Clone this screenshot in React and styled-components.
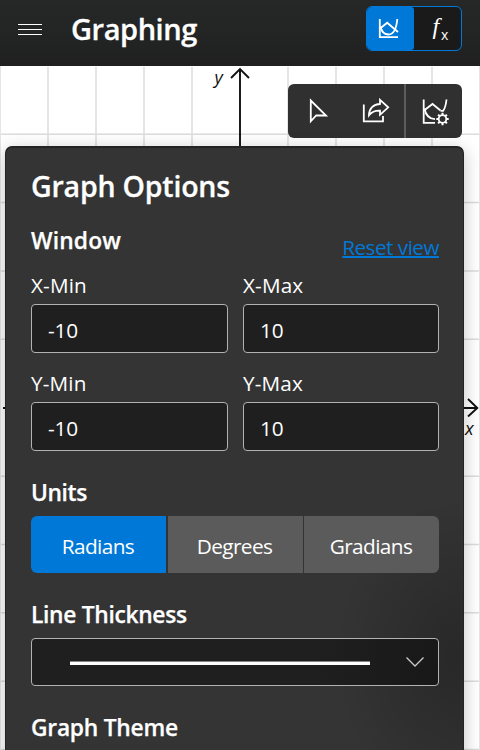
import React from "react";
import styled, { createGlobalStyle } from "styled-components";

const GlobalStyle = createGlobalStyle`
  * { box-sizing: border-box; }
  body {
    margin: 0;
    overflow: hidden;
    font-family: "Open Sans", "Noto Sans", sans-serif;
    color: #fff;
    background: #fff;
  }
`;

const Page = styled.div`
  display: flex;
  flex-direction: column;
  width: 480px;
  height: 750px;
  overflow: hidden;
`;

const Header = styled.header`
  display: flex;
  align-items: flex-start;
  flex: none;
  height: 66px;
  padding: 6px 18px 0;
  background: linear-gradient(#262828, #202020);
`;

const MenuButton = styled.button`
  display: flex;
  width: 24px;
  height: 48px;
  padding: 0;
  border: 0;
  background: none;
`;

const AppTitle = styled.h1`
  flex: 1;
  margin: 0 0 0 29px;
  font-size: 29px;
  font-weight: 600;
  line-height: 46px;
  letter-spacing: -0.45px;
  -webkit-text-stroke: 0.3px #fff;
`;

const ModeSwitch = styled.div`
  display: flex;
  width: 96px;
  height: 45px;
  border: 1.5px solid #0078d7;
  border-radius: 6px;
  background: #1a1a1a;
  overflow: hidden;
`;

const ModeButton = styled.button`
  flex: 1;
  padding: 0;
  border: 0;
  border-radius: ${(p) => (p.$active ? "0 3px 3px 0" : "0")};
  background: ${(p) => (p.$active ? "#0078d7" : "transparent")};
`;

const Stage = styled.main`
  position: relative;
  flex: 1;
  background: #fff;
`;

const Grid = styled.svg`
  display: block;
`;

const Toolbar = styled.div`
  position: absolute;
  top: 18px;
  left: 288px;
  display: flex;
  width: 174px;
  height: 54px;
  border-radius: 6px;
  background: #303030;
  overflow: hidden;
`;

const ToolButton = styled.button`
  flex: 0 0 58px;
  padding: 0;
  border: 0;
  background: none;
`;

const ToolDivider = styled.div`
  flex: 0 0 2px;
  background: #5c5c5c;
`;

const Panel = styled.section`
  position: absolute;
  top: 80px;
  left: 5px;
  display: flex;
  flex-direction: column;
  width: 459px;
  height: 640px;
  padding: 20px 25px 0 26px;
  border-radius: 7px;
  background:
    radial-gradient(ellipse 130px 160px at 459px 510px, rgba(0, 0, 0, 0.24), transparent),
    #343434;
  box-shadow: inset 0 0 0 1px #242424, inset 0 1px 0 1px #242424, 0 4px 18px rgba(0, 0, 0, 0.24);
`;

const PanelTitle = styled.h2`
  margin: 0;
  font-size: 28.5px;
  font-weight: 600;
  line-height: 41px;
  letter-spacing: -0.2px;
  -webkit-text-stroke: 0.3px #fff;
`;

const SectionTitle = styled.h3`
  height: 32px;
  margin: ${(p) => p.$gap || 0}px 0 0;
  font-size: 22.8px;
  font-weight: 600;
  line-height: 34px;
  letter-spacing: ${(p) => p.$track || 0}px;
  -webkit-text-stroke: 0.25px #fff;
`;

const SectionHead = styled.div`
  display: flex;
  justify-content: space-between;
  height: 47px;
  margin-top: 17px;
`;

const ResetLink = styled.a`
  margin-top: 7px;
  color: #0078d7;
  font-size: 20.7px;
  line-height: 32px;
  letter-spacing: -0.5px;
  text-decoration: underline;
  text-decoration-thickness: 1.5px;
  text-underline-offset: 1px;
  text-decoration-skip-ink: none;
`;

const FieldGrid = styled.div`
  display: grid;
  grid-template-columns: 197px 196px;
  gap: 16px 15px;
`;

const Field = styled.label`
  display: flex;
  flex-direction: column;
  gap: 5px;
  font-size: 20.7px;
  line-height: 28px;
  letter-spacing: 0.15px;
`;

const NumberInput = styled.input`
  width: 100%;
  height: 49px;
  padding: 3px 16px 1px;
  border: 1.5px solid #b2b2b2;
  border-radius: 4px;
  outline: 0;
  background: #1f1f1f;
  color: #fff;
  font: 20.8px "Open Sans", "Noto Sans", sans-serif;
  letter-spacing: -0.2px;
`;

const Segments = styled.div`
  display: grid;
  grid-template-columns: 135px 135px 135px;
  column-gap: 1.5px;
  height: 57px;
  margin-top: 8px;
  border-radius: 6px;
  overflow: hidden;
`;

const Segment = styled.button`
  padding: 3px 1px 1px 0;
  border: 0;
  border-radius: 0;
  background: ${(p) => (p.$active ? "#0078d7" : "#5b5b5b")};
  color: #fff;
  font: 20.8px "Open Sans", "Noto Sans", sans-serif;
  letter-spacing: -0.6px;
`;

const Select = styled.div`
  display: flex;
  align-items: center;
  justify-content: space-between;
  height: 48px;
  margin-top: 8px;
  padding: 0 13px 0 38px;
  border: 1.5px solid #b2b2b2;
  border-radius: 4px;
  background: linear-gradient(100deg, #1f1f1f 70%, #181818);
`;

const LineSample = styled.div`
  width: 300px;
  height: 4px;
  margin-top: 2px;
  border: solid #858585;
  border-width: 1px 0 0;
  background: #fff;
`;

const IconSvg = styled.svg`
  display: block;
  flex: none;
`;

const columns = [48, 96, 144, 192, 288, 336, 384, 432];
const rows = [68.2, 136.5, 205, 273.3, 410.2, 478.5, 546.8, 615.2, 683.5];

function GraphGrid() {
  return (
    <Grid width="480" height="684" viewBox="0 0 480 684" fill="none">
      <g stroke="#e5e5e5" strokeWidth="2">
        {columns.map((x) => <path key={x} d={`M${x} 1V684`} />)}
        <path d="M0 0V684M480 0V684" />
      </g>
      <g stroke="#dcdcdc" strokeWidth="1.4">
        {rows.map((y) => <path key={y} d={`M1 ${y}H479`} />)}
      </g>
      <g stroke="#111" strokeWidth="1.9">
        <path d="M240 3V684M231 12L240 3L249 12" />
        <path d="M3 342H477M468 333L477.3 342L468 350.5" />
      </g>
      <g fill="#111" fontFamily="Open Sans" fontStyle="italic" fontSize="18">
        <text x="214.5" y="18.3">y</text>
        <text x="465" y="369">x</text>
      </g>
    </Grid>
  );
}

function Icon({ width, height, children, stroke = "#fff", strokeWidth = 1.8 }) {
  return (
    <IconSvg
      width={width}
      height={height}
      viewBox={`0 0 ${width} ${height}`}
      fill="none"
      stroke={stroke}
      strokeWidth={strokeWidth}
    >
      {children}
    </IconSvg>
  );
}

const fields = [["X-Min", "-10"], ["X-Max", "10"], ["Y-Min", "-10"], ["Y-Max", "10"]];
const teeth = [0, 45, 90, 135, 180, 225, 270, 315];

export default function App() {
  return (
    <Page>
      <GlobalStyle />
      <Header>
        <MenuButton aria-label="Menu">
          <Icon width={24} height={48} strokeWidth={1.2}>
            <path d="M0 18.5H24M0 23.5H24M0 28.5H24" />
          </Icon>
        </MenuButton>
        <AppTitle>Graphing</AppTitle>
        <ModeSwitch>
          <ModeButton $active aria-label="Graph">
            <Icon width={47} height={43} strokeWidth={1.8}>
              <path d="M12.8 12V30.2H31" />
              <path d="M13 21.5L20.2 15.7L31 25" />
              <path d="M13.5 19.5C14.5 24.5 17.5 27.5 21.5 27.5C27.5 27.5 29.5 21 30.3 12" />
            </Icon>
          </ModeButton>
          <ModeButton aria-label="Function">
            <Icon width={47} height={43}>
              <g fill="#fff" stroke="none">
                <text x="18.5" y="27" fontFamily="Liberation Serif" fontStyle="italic" fontSize="24">f</text>
                <text x="27" y="32.5" fontFamily="Open Sans" fontSize="14">x</text>
              </g>
            </Icon>
          </ModeButton>
        </ModeSwitch>
      </Header>
      <Stage>
        <GraphGrid />
        <Toolbar>
          <ToolButton aria-label="Trace">
            <Icon width={58} height={54}>
              <path d="M22.8 16.5V37.3L28.2 31.5H38Z" />
            </Icon>
          </ToolButton>
          <ToolButton aria-label="Share">
            <Icon width={58} height={54}>
              <path d="M17.8 20.5V37.3H37V32" />
              <path d="M34 15.8L42.2 23.3L34 30.8V26.6C28.5 26.4 25.5 28 23 31.3C23 24.5 27.5 20.2 34 20Z" />
            </Icon>
          </ToolButton>
          <ToolDivider />
          <ToolButton aria-label="Graph options">
            <Icon width={58} height={54}>
              <path d="M17.7 15.5V38.8H29" />
              <path d="M18 26.5L26.5 20L34.5 26.5" />
              <path d="M18.5 24.5C19.5 30.5 23 34.8 29 35.2" />
              <path d="M40.5 15.5C40 20.5 39.2 24 37.2 26.8H34.5" />
              <circle cx="36.5" cy="35" r="3.8" />
              <g strokeWidth="2">
                {teeth.map((a) => (
                  <path key={a} d="M36.5 31V28.8" transform={`rotate(${a} 36.5 35)`} />
                ))}
              </g>
            </Icon>
          </ToolButton>
        </Toolbar>
        <Panel>
          <PanelTitle>Graph Options</PanelTitle>
          <SectionHead>
            <SectionTitle $track={0.15}>Window</SectionTitle>
            <ResetLink>Reset view</ResetLink>
          </SectionHead>
          <FieldGrid>
            {fields.map(([label, value]) => (
              <Field key={label}>
                {label}
                <NumberInput defaultValue={value} />
              </Field>
            ))}
          </FieldGrid>
          <SectionTitle $gap={25} $track={-0.4}>Units</SectionTitle>
          <Segments>
            <Segment $active>Radians</Segment>
            <Segment>Degrees</Segment>
            <Segment>Gradians</Segment>
          </Segments>
          <SectionTitle $gap={25} $track={-0.32}>Line Thickness</SectionTitle>
          <Select>
            <LineSample />
            <Icon width={20} height={12} stroke="#ccc" strokeWidth={1.3}>
              <path d="M1.5 1.5L10 10L18.5 1.5" />
            </Icon>
          </Select>
          <SectionTitle $gap={25} $track={-0.25}>Graph Theme</SectionTitle>
        </Panel>
      </Stage>
    </Page>
  );
}
